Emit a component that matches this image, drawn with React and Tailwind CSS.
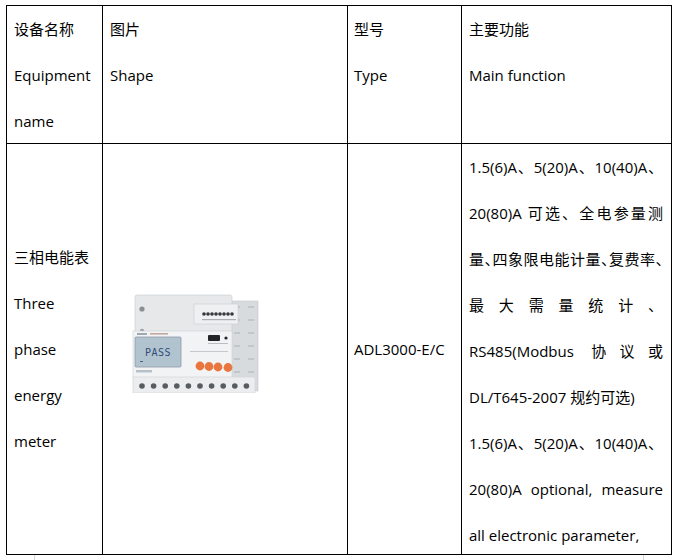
import React from 'react'

// Small drawing of the three phase meter shown in the "Shape" column.
function MeterPicture() {
    const screws = [0, 1, 2, 3, 4, 5, 6, 7, 8, 9]
    const pins = [0, 1, 2, 3, 4, 5, 6, 7]
    return (
        <svg width="135" height="102" viewBox="0 0 135 102">
            {/* right side module with ribs */}
            <rect x="102" y="10" width="28" height="90" fill="#d8dbde" stroke="#c3c7cb" strokeWidth="0.6" />
            {[0, 1, 2, 3, 4, 5, 6, 7, 8, 9, 10, 11].map((i) => (
                <line key={i} x1={106 + (i % 2) * 14} y1={16 + Math.floor(i / 2) * 13} x2={112 + (i % 2) * 14} y2={16 + Math.floor(i / 2) * 13} stroke="#b4b9be" strokeWidth="1.2" />
            ))}
            {/* top cover */}
            <rect x="7" y="4" width="97" height="40" rx="2" fill="#e6e8ea" stroke="#c8cbce" strokeWidth="0.6" />
            <circle cx="14" cy="18" r="2.6" fill="#8a8f94" />
            <circle cx="14" cy="40" r="2.2" fill="#9a9fa4" />
            <rect x="66" y="13" width="44" height="20" fill="#eef0f1" stroke="#c9cdd1" strokeWidth="0.6" />
            {pins.map((i) => (
                <circle key={i} cx={76 + i * 4} cy="23" r="1.8" fill="#33373b" />
            ))}
            <rect x="74" y="28" width="34" height="1.2" fill="#a9aeb3" />
            {/* front panel */}
            <rect x="5" y="40" width="99" height="48" fill="#f2f3f4" stroke="#cdd0d3" strokeWidth="0.6" />
            <rect x="9" y="42" width="10" height="2" fill="#9fa9b3" />
            <rect x="22" y="42" width="18" height="1.6" fill="#c2a9a0" />
            <rect x="7" y="46" width="46" height="30" rx="1" fill="#b2c3d0" stroke="#8d9ba7" strokeWidth="0.8" />
            <text x="30" y="65" textAnchor="middle" fontSize="10" fontFamily="'DejaVu Sans Mono', monospace" fill="#2f4e7a" letterSpacing="0.5">PASS</text>
            <rect x="12" y="70" width="3" height="1" fill="#4a6488" />
            <rect x="8" y="79" width="16" height="2.5" fill="#b7c1ca" />
            <rect x="80" y="44" width="12" height="6" rx="1" fill="#222528" />
            <circle cx="98" cy="47" r="1.6" fill="#222528" />
            <rect x="80" y="52" width="20" height="1" fill="#b9bec3" />
            <rect x="62" y="60" width="38" height="1" fill="#c5c9cd" />
            <circle cx="72" cy="75" r="4.4" fill="#e8763e" />
            <circle cx="81" cy="75.5" r="4.4" fill="#e8763e" />
            <circle cx="90" cy="76" r="4.4" fill="#e8763e" />
            <circle cx="100" cy="76.5" r="4.4" fill="#e8763e" />
            {/* bottom terminals */}
            <rect x="5" y="86" width="122" height="16" fill="#ebedee" stroke="#cfd2d5" strokeWidth="0.6" />
            {screws.map((i) => (
                <circle key={i} cx={14 + i * 11.6} cy="95" r="2.8" fill="#575c61" />
            ))}
        </svg>
    )
}

function Line({ children, justify, halt }) {
    return (
        <div
            className={
                justify
                    ? halt
                        ? 'whitespace-nowrap text-justify [text-align-last:justify] [font-feature-settings:"halt"]'
                        : 'whitespace-nowrap text-justify [text-align-last:justify]'
                    : 'whitespace-nowrap'
            }
        >
            {children}
        </div>
    )
}

export default function App() {
    return (
        <div className="h-[560px] w-[679px] overflow-hidden bg-white pl-[6px] pt-[5px] font-['Open_Sans','Noto_Sans_CJK_SC',sans-serif] text-[15px] leading-[46px] text-black">
            <div className="w-[666px] border-l border-t border-black">
                <div className="flex h-[138px]">
                    <div className="w-[96px] border-b border-r border-black px-[7px]">
                        <Line>设备名称</Line>
                        <Line>Equipment</Line>
                        <Line>name</Line>
                    </div>
                    <div className="w-[245px] border-b border-r border-black px-[7px]">
                        <Line>图片</Line>
                        <Line>Shape</Line>
                    </div>
                    <div className="w-[114px] border-b border-r border-black px-[6px]">
                        <Line>型号</Line>
                        <Line>Type</Line>
                    </div>
                    <div className="w-[210px] border-b border-r border-black px-[7px]">
                        <Line>主要功能</Line>
                        <Line>Main function</Line>
                    </div>
                </div>

                <div className="flex h-[411px]">
                    <div className="flex w-[96px] flex-col justify-center border-b border-r border-black px-[7px]">
                        <Line>三相电能表</Line>
                        <Line>Three</Line>
                        <Line>phase</Line>
                        <Line>energy</Line>
                        <Line>meter</Line>
                    </div>
                    <div className="flex w-[245px] items-center border-b border-r border-black pb-[14px] pl-[25px]">
                        <MeterPicture />
                    </div>
                    <div className="flex w-[114px] items-center border-b border-r border-black px-[6px]">
                        <Line>ADL3000-E/C</Line>
                    </div>
                    <div className="w-[210px] overflow-hidden border-b border-r border-black pl-[7px] pr-[8px]">
                        <Line justify>1.5(6)A、5(20)A、10(40)A、</Line>
                        <Line justify>20(80)A 可选、全电参量测</Line>
                        <Line justify halt>量、四象限电能计量、复费率、</Line>
                        <Line justify>最大需量统计、</Line>
                        <Line justify>RS485(Modbus 协议或</Line>
                        <Line>DL/T645-2007 规约可选)</Line>
                        <Line justify>1.5(6)A、5(20)A、10(40)A、</Line>
                        <Line justify>20(80)A optional, measure</Line>
                        <Line>all electronic parameter,</Line>
                    </div>
                </div>
            </div>
            <div className="flex h-[6px]">
                <div className="ml-[28px] w-px bg-gray-300" />
                <div className="ml-[608px] w-px bg-gray-300" />
            </div>
        </div>
    )
}
